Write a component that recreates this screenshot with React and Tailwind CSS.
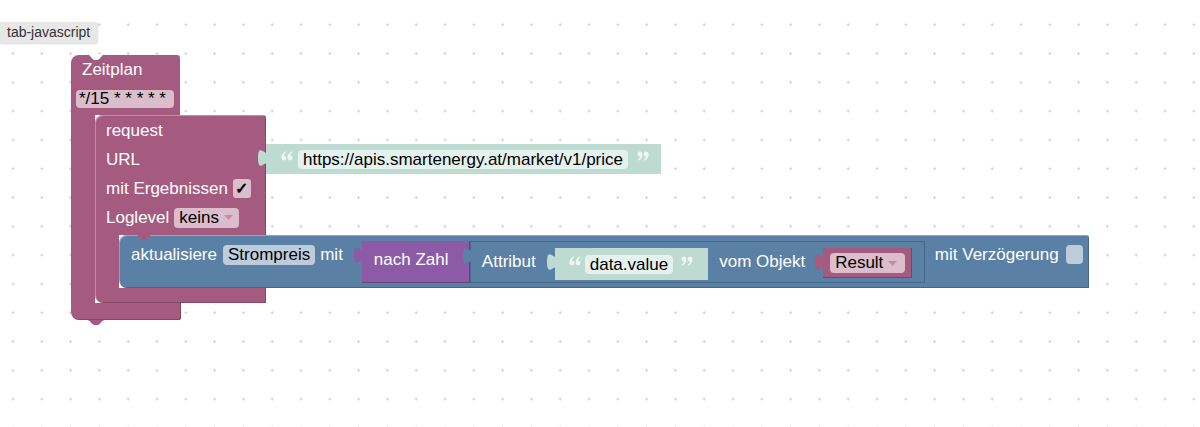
import React from 'react'

const Grid = () => (
  <svg className="absolute inset-0" width="1200" height="427">
    <defs>
      <pattern id="grid" x="-1.4" y="10.3" width="28.8" height="28.8" patternUnits="userSpaceOnUse">
        <path d="M13,14.4 H15.8 M14.4,13 V15.8" stroke="#cfcfcf" strokeWidth="1" />
      </pattern>
    </defs>
    <rect width="1200" height="427" fill="url(#grid)" />
  </svg>
)

// puzzle tab sticking out on the left of a value block
const Tab = ({ fill }) => (
  <svg className="absolute left-[-10px] top-[2px]" width="12" height="24" viewBox="0 0 12 24">
    <path d="M12,3 C12,15 2,-6 2,12 S12,9 12,22 Z" fill={fill} />
  </svg>
)

// notch cut in the top edge of a statement block
const TopNotch = ({ fill }) => (
  <svg className="absolute left-[16px] top-[-1px]" width="18" height="7" viewBox="0 0 18 7">
    <path d="M0,0 C3,0 5,6 7.5,6 H10.5 C13,6 15,0 18,0 Z" fill={fill} />
  </svg>
)

// tab under a statement block
const BottomTab = ({ fill }) => (
  <svg className="absolute left-[16px] top-full" width="18" height="6" viewBox="0 0 18 6">
    <path d="M0,0 C3,0 5,5 7.5,5 H10.5 C13,5 15,0 18,0 Z" fill={fill} />
  </svg>
)

const Arrow = () => (
  <svg className="ml-[5px]" width="9" height="5" viewBox="0 0 9 5">
    <path d="M0,0 H9 L4.5,5 Z" fill="#c98ba9" />
  </svg>
)

// the quote images of a text block
const QuoteMark = ({ close }) => (
  <svg className="relative top-[-3px] shrink-0" width="12" height="12" viewBox="0 0 12 12">
    <g fill="#eef6f3" transform={close ? 'rotate(180 6 6)' : undefined}>
      <path d="M0.4,8 Q0.3,3.2 4.6,1.2 L5.2,2.2 Q2.9,3.7 3,5.5 A2.5,2.5 0 1 1 0.4,8 Z" />
      <path d="M6.6,8 Q6.5,3.2 10.8,1.2 L11.4,2.2 Q9.1,3.7 9.2,5.5 A2.5,2.5 0 1 1 6.6,8 Z" />
    </g>
  </svg>
)

const UrlBlock = () => (
  <div className="absolute left-[171px] top-[29px] h-[30px] bg-[#bddbd1] flex items-center pl-[15px] pr-[12px]">
    <Tab fill="#bddbd1" />
    <QuoteMark />
    <span className="ml-[5px] h-[19px] px-[5px] rounded-[4px] bg-[#e5f1ed] text-black leading-[19px] whitespace-nowrap">https://apis.smartenergy.at/market/v1/price</span>
    <span className="ml-[9px] flex"><QuoteMark close /></span>
  </div>
)

const BlueBlock = () => (
  <div className="relative w-[970px] h-[53px] bg-[#5b80a5] rounded-tl-[8px] rounded-tr-[3px] rounded-bl-[8px] flex items-start pl-[12px] pt-[6px] text-white shadow-[inset_1px_1px_0_rgba(255,255,255,0.3),inset_-1px_-1px_0_rgba(0,0,0,0.2)]">
    <TopNotch fill="#a55b80" />
    <span className="mt-[4px] leading-[20px]">aktualisiere</span>
    <span className="ml-[6px] mt-[4px] h-[20px] px-[5px] rounded-[4px] bg-[#bdccdb] text-black leading-[20px]">Strompreis</span>
    <span className="ml-[5px] mt-[4px] leading-[20px]">mit</span>

    <div className="relative ml-[19px] w-[108px] h-[42px] bg-[#8d5ba6] pl-[12px] pt-[6px] shadow-[inset_-1px_-1px_0_rgba(0,0,0,0.25)]">
      <Tab fill="#8d5ba6" />
      <span className="leading-[20px]">nach Zahl</span>
    </div>

    <div className="relative w-[455px] h-[42px] bg-[#5b80a5] border border-[#46688b] flex items-start pl-[11px]">
      <Tab fill="#5b80a5" />
      <span className="mt-[10px] leading-[20px]">Attribut</span>
      <div className="relative ml-[19px] mt-[6px] h-[32px] bg-[#bddbd1] flex items-center pl-[14px] pr-[15px]">
        <Tab fill="#bddbd1" />
        <QuoteMark />
        <span className="ml-[4px] h-[19px] px-[5px] rounded-[4px] bg-[#e5f1ed] text-black leading-[19px]">data.value</span>
        <span className="ml-[8px] flex"><QuoteMark close /></span>
      </div>
      <span className="ml-[11px] mt-[10px] leading-[20px]">vom Objekt</span>
      <div className="relative ml-[18px] mt-[6px] w-[89px] h-[30px] bg-[#a55b80] pl-[7px] pt-[5px] shadow-[inset_-1px_-1px_0_rgba(0,0,0,0.25)]">
        <Tab fill="#a55b80" />
        <div className="w-[75px] h-[20px] rounded-[4px] bg-[#dbbdcc] pl-[5px] flex items-center text-black">
          Result<Arrow />
        </div>
      </div>
    </div>

    <span className="ml-[10px] mt-[4px] leading-[20px]">mit Verzögerung</span>
    <span className="ml-[7px] mt-[4px] w-[17px] h-[19px] rounded-[4px] bg-[#bdccdb]" />
    <BottomTab fill="#5b80a5" />
  </div>
)

const RequestBlock = () => (
  <div className="flex flex-col">
    <div className="relative w-[171px] h-[120px] bg-[#a55b80] rounded-tl-[8px] rounded-tr-[3px] pl-[11px] pt-[1px] text-white shadow-[inset_1px_1px_0_rgba(255,255,255,0.3),inset_-1px_0_0_rgba(0,0,0,0.2)]">
      <div className="h-[29px] flex items-center">request</div>
      <div className="h-[29px] flex items-center">URL</div>
      <div className="h-[29px] flex items-center">
        mit Ergebnissen
        <span className="ml-[5px] w-[18px] h-[19px] rounded-[3px] bg-[#dbbdcc] flex items-center justify-center text-black font-bold text-[16px]">✓</span>
      </div>
      <div className="h-[29px] flex items-center">
        Loglevel
        <span className="ml-[5px] h-[20px] pl-[5px] pr-[6px] rounded-[4px] bg-[#dbbdcc] flex items-center text-black">
          keins<Arrow />
        </span>
      </div>
      <UrlBlock />
    </div>
    <div className="flex">
      <div className="w-[24px] bg-[#a55b80] shadow-[inset_1px_0_0_rgba(255,255,255,0.3)]" />
      <BlueBlock />
    </div>
    <div className="relative w-[171px] h-[15px] bg-[#a55b80] rounded-bl-[8px] shadow-[inset_1px_0_0_rgba(255,255,255,0.3),inset_-1px_-1px_0_rgba(0,0,0,0.2)]">
      <BottomTab fill="#a55b80" />
    </div>
  </div>
)

const ZeitplanBlock = () => (
  <div className="absolute left-[71px] top-[55px] flex flex-col text-[17px]">
    <div className="relative w-[109px] h-[60px] bg-[#a55b80] rounded-tl-[8px] rounded-tr-[3px] pl-[5px] text-white">
      <TopNotch fill="#ffffff" />
      <div className="h-[30px] pl-[6px] flex items-center">Zeitplan</div>
      <div className="mt-[5px] w-[98px] h-[18px] rounded-[4px] bg-[#dbbdcc] pl-[3px] flex items-center text-black whitespace-nowrap">*/15 * * * * *</div>
    </div>
    <div className="flex">
      <div className="w-[24px] bg-[#a55b80]" />
      <RequestBlock />
    </div>
    <div className="relative w-[110px] h-[17px] bg-[#a55b80] rounded-bl-[8px] rounded-br-[2px] shadow-[inset_-1px_-1px_0_rgba(0,0,0,0.2)]">
      <BottomTab fill="#a55b80" />
    </div>
  </div>
)

export default function App() {
  return (
    <div className="relative w-[1200px] h-[427px] overflow-hidden bg-white font-['Liberation_Sans',Arial,sans-serif]">
      <Grid />
      <div className="absolute left-0 top-[22px] h-[21px] pl-[7px] pr-[8px] flex items-center rounded-r-[3px] bg-[#e7e7e7] shadow-[0_1px_2px_rgba(0,0,0,0.15)] text-[14px] text-[#333]">
        tab-javascript
      </div>
      <ZeitplanBlock />
    </div>
  )
}
